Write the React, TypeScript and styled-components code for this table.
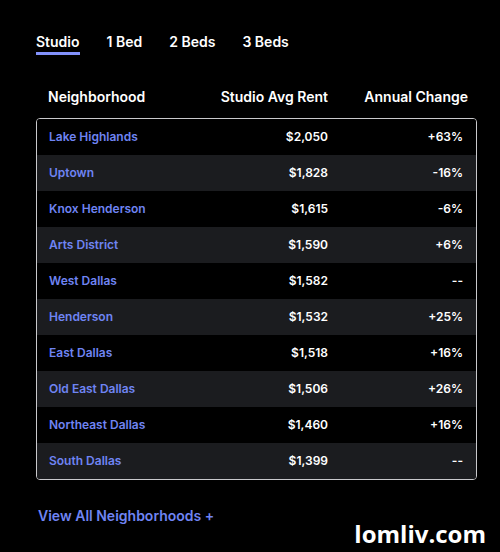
import React, { useState } from "react";
import styled, { createGlobalStyle } from "styled-components";

const GlobalStyle = createGlobalStyle`
  html, body {
    margin: 0;
    background: #000;
    font-family: Inter, "Noto Sans", sans-serif;
  }
`;

const TABS = ["Studio", "1 Bed", "2 Beds", "3 Beds"];

const ROWS = [
  { name: "Lake Highlands", rent: "$2,050", change: "+63%" },
  { name: "Uptown", rent: "$1,828", change: "-16%" },
  { name: "Knox Henderson", rent: "$1,615", change: "-6%" },
  { name: "Arts District", rent: "$1,590", change: "+6%" },
  { name: "West Dallas", rent: "$1,582", change: "--" },
  { name: "Henderson", rent: "$1,532", change: "+25%" },
  { name: "East Dallas", rent: "$1,518", change: "+16%" },
  { name: "Old East Dallas", rent: "$1,506", change: "+26%" },
  { name: "Northeast Dallas", rent: "$1,460", change: "+16%" },
  { name: "South Dallas", rent: "$1,399", change: "--" },
];

function App() {
  const [active, setActive] = useState(0);
  const label = TABS[active];

  return (
    <Page>
      <GlobalStyle />
      <TabBar>
        {TABS.map((t, i) => (
          <Tab key={t} active={i === active} onClick={() => setActive(i)}>
            {t}
          </Tab>
        ))}
      </TabBar>
      <HeaderRow>
        <HeadCell>Neighborhood</HeadCell>
        <HeadCell align="right">{label} Avg Rent</HeadCell>
        <HeadCell align="right">Annual Change</HeadCell>
      </HeaderRow>
      <TableBox>
        {ROWS.map((r, i) => (
          <Row key={r.name} striped={i % 2 === 1}>
            <NameLink href="#">{r.name}</NameLink>
            <Cell>{r.rent}</Cell>
            <Cell>{r.change}</Cell>
          </Row>
        ))}
      </TableBox>
      <ViewAll href="#">View All Neighborhoods +</ViewAll>
      <Watermark>lomliv.com</Watermark>
    </Page>
  );
}

const Page = styled.div`
  position: relative;
  width: 500px;
  height: 552px;
  box-sizing: border-box;
  padding: 33px 0 0 36px;
  color: #fff;
  overflow: hidden;
`;

const TabBar = styled.div`
  display: flex;
  gap: 27px;
`;

const Tab = styled.button<{ active: boolean }>`
  background: none;
  border: none;
  padding: 0 0 2px;
  color: #fff;
  font-family: Inter, sans-serif;
  font-size: 14px;
  font-weight: 600;
  line-height: 17px;
  cursor: pointer;
  border-bottom: 3px solid ${(p) => (p.active ? "#8392fb" : "transparent")};
`;

const HeaderRow = styled.div`
  display: grid;
  grid-template-columns: 1fr 140px 140px;
  width: 441px;
  box-sizing: border-box;
  padding: 0 9px 0 12px;
  margin-top: 27px;
  height: 28px;
  align-items: center;
`;

const HeadCell = styled.div<{ align?: string }>`
  font-size: 14px;
  font-weight: 600;
  text-align: ${(p) => p.align || "left"};
  white-space: nowrap;
`;

const TableBox = styled.div`
  width: 441px;
  box-sizing: border-box;
  margin-top: 8px;
  border: 1px solid #c9c9cc;
  border-radius: 4px;
  overflow: hidden;
`;

const Row = styled.div<{ striped: boolean }>`
  display: grid;
  grid-template-columns: 1fr 140px 135px;
  height: 36px;
  box-sizing: border-box;
  align-items: center;
  padding: 0 13px 1px 12px;
  background: ${(p) => (p.striped ? "#1b1c1f" : "#000")};
  font-size: 12px;
  font-weight: 600;
`;

const NameLink = styled.a`
  color: #6f84f3;
  text-decoration: none;
`;

const Cell = styled.div`
  text-align: right;
  color: #fff;
`;

const ViewAll = styled.a`
  display: block;
  width: fit-content;
  margin: 27px 0 0 2px;
  color: #6f84f3;
  font-size: 14px;
  line-height: 17px;
  font-weight: 600;
  text-decoration: none;
`;

const Watermark = styled.div`
  position: absolute;
  right: 14px;
  bottom: 2px;
  font-family: "Open Sans", sans-serif;
  font-size: 24px;
  font-weight: 700;
  color: #fff;
`;

export default App;
